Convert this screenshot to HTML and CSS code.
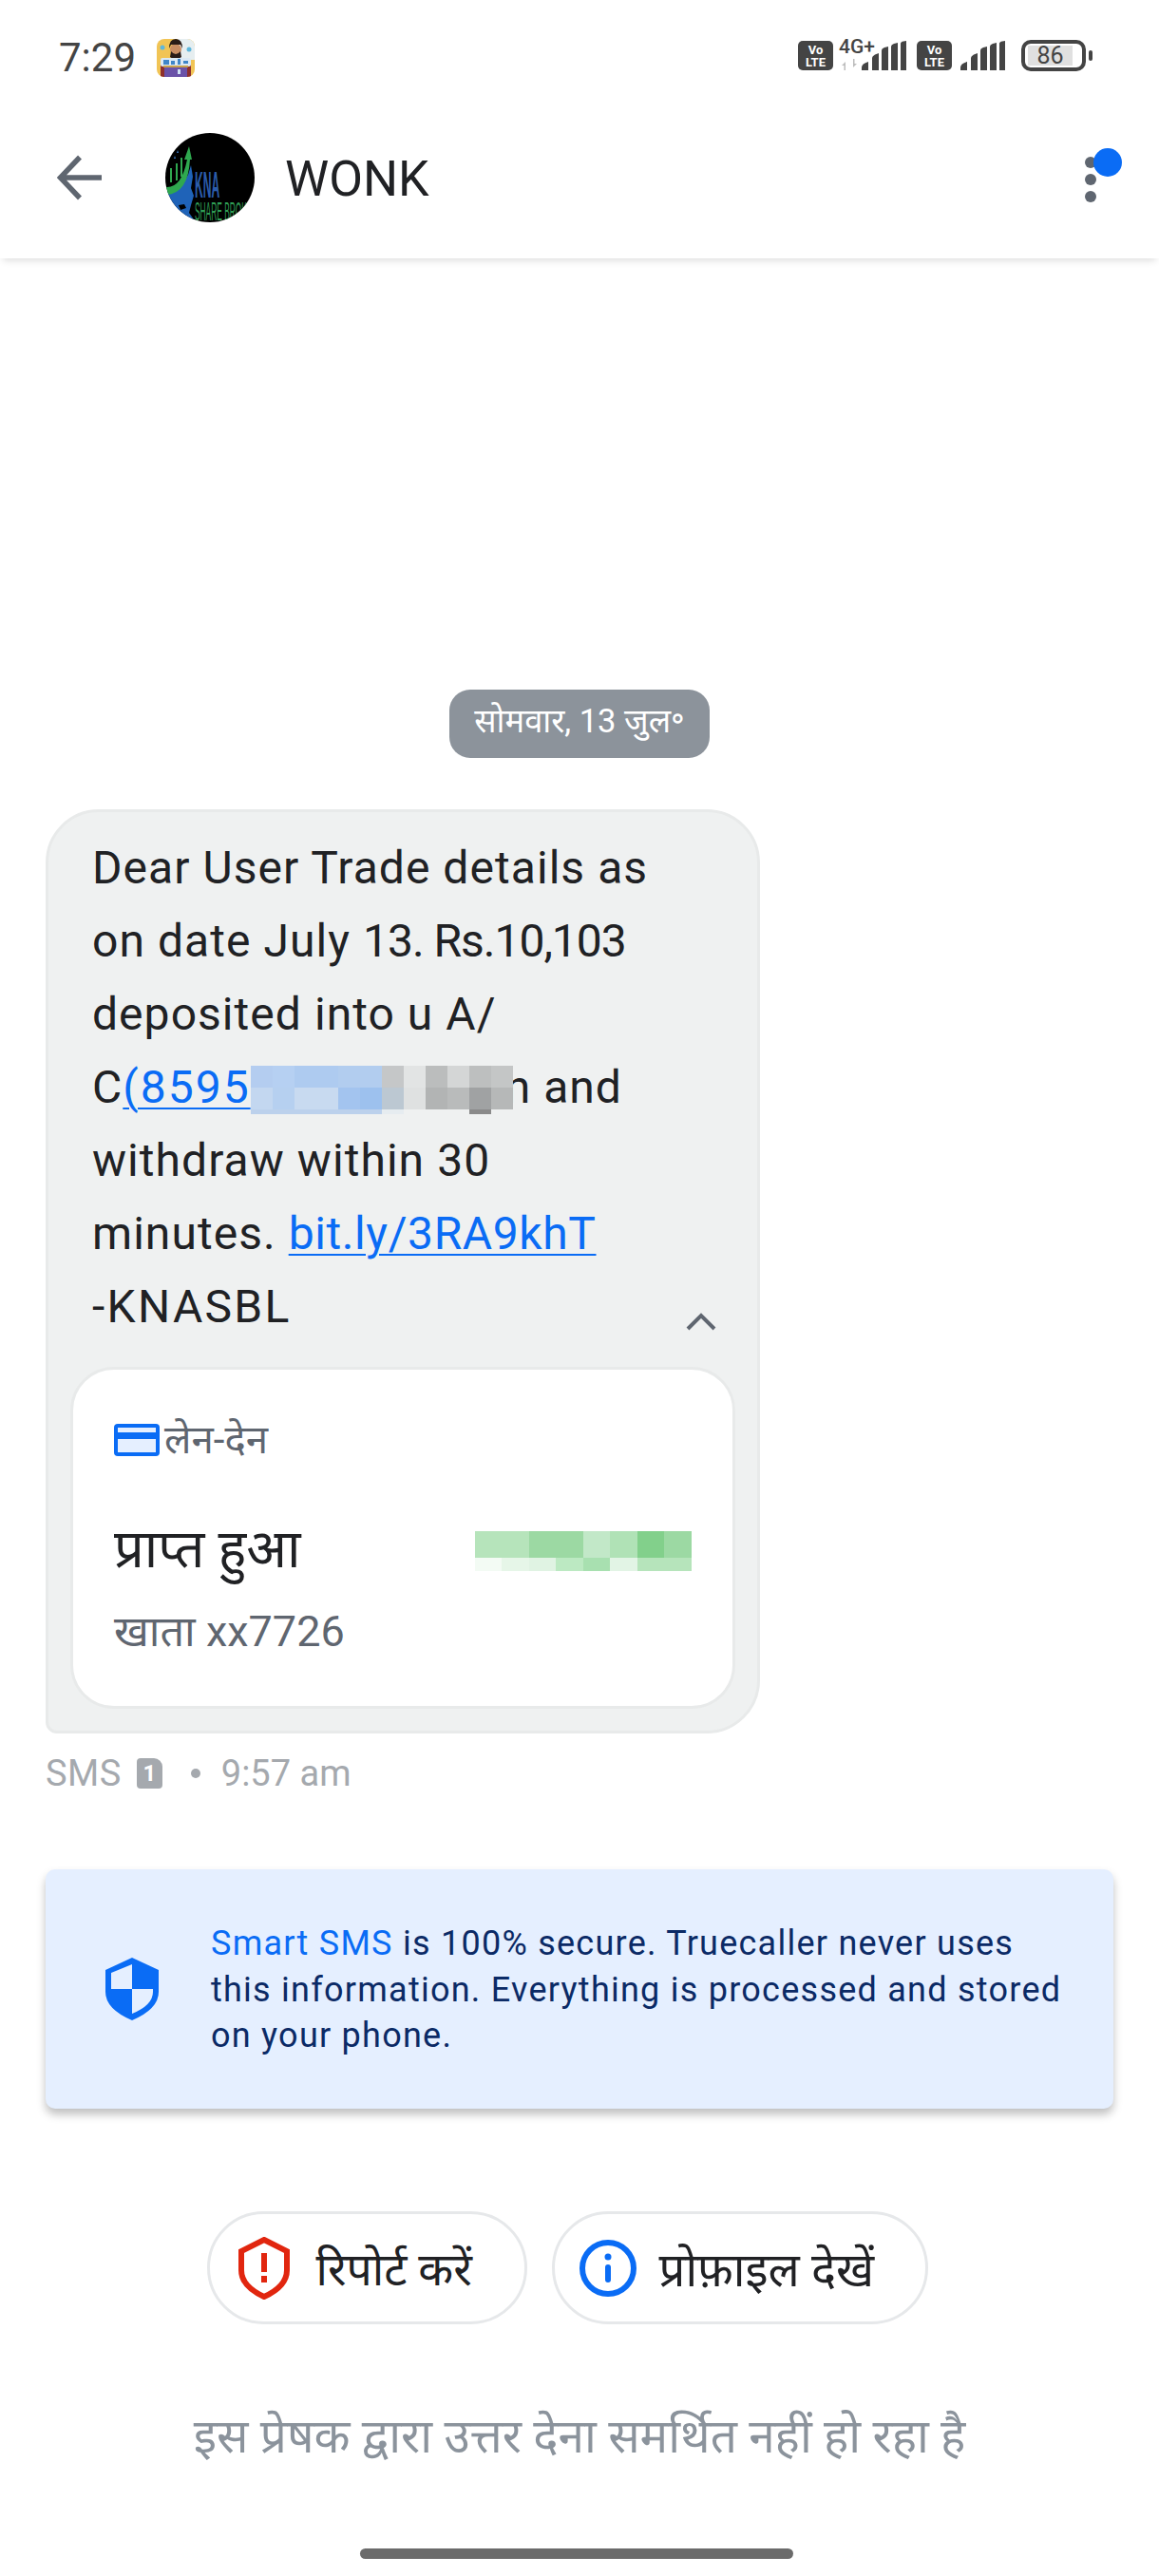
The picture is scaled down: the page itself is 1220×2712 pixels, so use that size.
FILE: index.html
```html
<!DOCTYPE html>
<html lang="hi">
<head>
    <meta charset="UTF-8">
    <meta name="viewport" content="width=device-width, initial-scale=1.0">
    <title>WONK</title>
    <link rel="stylesheet" href="styles.css">
</head>
<body>

<div class="phone">
    <div class="status-bar">
        <span class="clock">7:29</span>
        <svg class="app-icon" viewBox="0 0 40 40" width="40" height="40">
            <defs><clipPath id="iconClip"><rect width="40" height="40" rx="8"/></clipPath></defs>
            <g clip-path="url(#iconClip)">
                <rect width="40" height="40" fill="#f1c455"/>
                <rect x="22" width="18" height="22" fill="#e6eef0"/>
                <path d="M4 40V27q1-6 10-7h12q9 1 10 7v13z" fill="#8e2f2c"/>
                <circle cx="20" cy="11" r="6" fill="#c98d63"/>
                <path d="M13 10q0-10 7-10t7 10l-2-4H15zM15 13q5 6 10 0l1 6q-6 5-12 0z" fill="#2a1c18"/>
                <rect x="4" y="20" width="32" height="9" rx="2" fill="#dbe9f5"/>
                <path d="M7 22h6v5H7zM15 23h4v4h-4zM22 21h3v6h-3zM28 23h5v3h-5z" fill="#3f86c9"/>
                <rect x="8" y="29" width="24" height="11" fill="#6a52a8"/>
                <rect x="7" y="28" width="26" height="2" fill="#c9a24d"/>
                <path d="M22 32h3v5h-3z" fill="#cfe2f5"/>
                <circle cx="6" cy="9" r="2.500" fill="#5fb7dc"/>
                <circle cx="34" cy="11" r="2.500" fill="#5fb7dc"/>
            </g>
        </svg>
        <div class="status-icons">
            <span class="volte">Vo<br>LTE</span>
            <div class="net">
                <span class="net-label">4G+</span>
                <svg class="arrows" viewBox="0 0 16 12" width="16" height="12">
                    <path d="M0 7l4-4v9H2.500V7zM16 5l-4 4V0h1.500v5z" fill="#bdbdbd"/>
                </svg>
            </div>
            <svg class="signal" viewBox="0 0 48 31" width="48" height="31">
                <path d="M0 31v-3q0-4 7-6v9zM11 31V18q0-2 3-3.500l4-1.500V31zM21 31V10q0-2 3-3l4-1v25zM31 31V6q0-2 3-3l4-1v29zM41 31V3q0-2 3-2.500l3-.5v31z" fill="#444"/>
            </svg>
            <span class="volte volte-two">Vo<br>LTE</span>
            <svg class="signal signal-two" viewBox="0 0 48 31" width="48" height="31">
                <path d="M0 31v-3q0-4 7-6v9zM11 31V18q0-2 3-3.500l4-1.500V31zM21 31V10q0-2 3-3l4-1v25zM31 31V6q0-2 3-3l4-1v29zM41 31V3q0-2 3-2.500l3-.5v31z" fill="#444"/>
            </svg>
            <div class="battery"><span class="battery-level">86</span></div>
            <span class="battery-nub"></span>
        </div>
    </div>

    <header class="top-bar">
        <svg class="back" viewBox="0 0 48 48" width="48" height="48">
            <path d="M47 24H4M24 2.500L3.500 24 24 45.500" fill="none" stroke="#5f6670" stroke-width="5.500"/>
        </svg>
        <svg class="avatar" viewBox="0 0 94 94" width="94" height="94">
            <defs><clipPath id="avatarClip"><circle cx="47" cy="47" r="47"/></clipPath></defs>
            <g clip-path="url(#avatarClip)">
                <rect width="94" height="94" fill="#000"/>
                <path d="M0 62Q14 62 24 44L27 34 29 46 27 58 30 66 27 76 25 84 32 94H0z" fill="#1f63b8"/>
                <path d="M14 76l6-1 2 4-6 2z" fill="#000"/>
                <path d="M1 57Q17 58 23 28l-3 0 5-14 3 14-2 0Q24 64 1 65z" fill="#2fa84f"/>
                <path d="M5 52V37h2v15zM11 50V32h2v18zM16 46V26h2v20z" fill="#2fa84f"/>
                <path d="M10 24l1 3-2 0zM13 18l1 3-2 0z" fill="#3b7cc9"/>
                <text class="avatar-kna" transform="translate(31 68) scale(.32 1)">KNA</text>
                <text class="avatar-share" transform="translate(31 92) scale(.31 1)">SHARE BROKER</text>
            </g>
        </svg>
        <h1 class="sender">WONK</h1>
        <div class="menu">
            <span class="menu-dot"></span>
            <span class="menu-dot"></span>
            <span class="menu-dot"></span>
            <span class="unread-dot"></span>
        </div>
    </header>

    <main class="thread">
        <div class="date-chip">सोमवार, 13 जुल॰</div>

        <div class="bubble">
            <p class="message">
                Dear User Trade details as<br>
                on date July <span class="tight">13. Rs.10,103</span><br>
                deposited into u A/<br>
                C<a class="link link-num">(8595</a><span class="blur-number"></span>n and<br>
                withdraw within 30<br>
                minutes. <a class="link link-short">bit.ly/3RA9khT</a><br>
                <span class="signature">-KNASBL</span>
            </p>
            <svg class="chevron" viewBox="0 0 32 20" width="32" height="20">
                <path d="M2 18L16 4l14 14" fill="none" stroke="#5f6670" stroke-width="4"/>
            </svg>

            <div class="txn-card">
                <div class="txn-type">
                    <svg viewBox="0 0 48 34" width="48" height="34">
                        <rect width="48" height="34" rx="4" fill="#0a6cf5"/>
                        <rect x="4" y="4" width="40" height="5" fill="#e5efff"/>
                        <rect x="4" y="16" width="40" height="14" fill="#e5efff"/>
                    </svg>
                    <span>लेन-देन</span>
                </div>
                <div class="txn-row">
                    <span class="txn-status">प्राप्त हुआ</span>
                    <span class="blur-amount"></span>
                </div>
                <div class="txn-account">खाता xx7726</div>
            </div>
        </div>

        <div class="msg-meta">
            <span class="meta-sms">SMS</span>
            <span class="sim">1</span>
            <span class="meta-dot"></span>
            <span>9:57 am</span>
        </div>

        <div class="notice">
            <svg class="notice-shield" viewBox="0 0 56 66" width="56" height="66">
                <path d="M28 0L56 13V36Q56 54 28 66 0 54 0 36V13z" fill="#0a6cf5"/>
                <path d="M28 7V33H6V16zM28 33H50V36Q50 50 28 59z" fill="#e5efff"/>
            </svg>
            <p class="notice-text"><span class="accent">Smart SMS</span> is 100% secure. Truecaller never uses this information. Everything is processed and stored on your phone.</p>
        </div>

        <div class="actions">
            <button class="pill pill-report">
                <svg viewBox="0 0 54 66" width="54" height="66">
                    <path d="M27 3L51 15V35Q51 52 27 63 3 52 3 35V15z" fill="none" stroke="#e1260f" stroke-width="6"/>
                    <rect x="24" y="17" width="6" height="20" fill="#e1260f"/>
                    <rect x="24" y="41" width="6" height="7" fill="#e1260f"/>
                </svg>
                <span>रिपोर्ट करें</span>
            </button>
            <button class="pill pill-profile">
                <svg viewBox="0 0 60 60" width="60" height="60">
                    <circle cx="30" cy="30" r="27" fill="none" stroke="#0a6cf5" stroke-width="6"/>
                    <circle cx="30" cy="18" r="3.500" fill="#0a6cf5"/>
                    <rect x="27" y="26" width="6" height="19" rx="3" fill="#0a6cf5"/>
                </svg>
                <span>प्रोफ़ाइल देखें</span>
            </button>
        </div>

        <p class="no-reply">इस प्रेषक द्वारा उत्तर देना समर्थित नहीं हो रहा है</p>
    </main>

    <div class="home-bar"></div>
</div>

</body>
</html>
```

FILE: styles.css
```css
* {
    box-sizing: border-box;
}
body {
    margin: 0;
    background-color: #fff;
    font-family: 'Roboto', 'Noto Sans', 'Noto Sans Devanagari', sans-serif;
    color: #202124;
}
.phone {
    width: 1220px;
    height: 2712px;
    overflow: hidden;
    display: flex;
    flex-direction: column;
}

/* status bar */
.status-bar {
    height: 102px;
    padding: 41px 70px 0 62px;
    display: flex;
    align-items: flex-start;
}
.clock {
    font-size: 42px;
    line-height: 36px;
    color: #444;
    margin-top: 2px;
}
.app-icon {
    margin-left: 22px;
}
.status-icons {
    margin-left: auto;
    margin-top: 2px;
    display: flex;
    align-items: flex-start;
}
.volte {
    width: 37px;
    height: 31px;
    border-radius: 5px;
    background-color: #444;
    color: #fff;
    font-size: 13px;
    font-weight: 700;
    line-height: 13px;
    padding-top: 3px;
    text-align: center;
}
.volte-two {
    margin-left: 10px;
}
.net {
    width: 24px;
    margin-left: 6px;
    height: 31px;
    position: relative;
}
.net-label {
    position: absolute;
    left: 0;
    top: -6px;
    font-size: 21px;
    font-weight: 500;
    color: #444;
}
.arrows {
    position: absolute;
    left: 3px;
    top: 19px;
}
.signal-two {
    margin-left: 9px;
}
.battery {
    margin-left: 16px;
    margin-top: -1px;
    width: 68px;
    height: 33px;
    border: 4px solid #444;
    border-radius: 10px;
    padding: 2px 3px;
}
.battery-level {
    display: block;
    width: 47px;
    height: 21px;
    background-color: #e0e0e0;
    color: #444;
    font-size: 25px;
    line-height: 21px;
    text-align: center;
}
.battery-nub {
    width: 4px;
    height: 11px;
    margin: 10px 0 0 3px;
    background-color: #444;
    border-radius: 2px;
}

/* top bar */
.top-bar {
    height: 170px;
    padding: 0 66px 0 60px;
    display: flex;
    align-items: center;
    background-color: #fff;
    box-shadow: 0 5px 8px -3px rgba(0, 0, 0, 0.14);
    position: relative;
}
.avatar {
    margin-left: 66px;
}
.avatar-kna {
    font-size: 38px;
    font-weight: 700;
    fill: #2b5cab;
    font-family: 'Liberation Sans', sans-serif;
}
.avatar-share {
    font-size: 27px;
    fill: #2f9e55;
    font-family: 'Liberation Sans', sans-serif;
}
.sender {
    margin: 3px 0 0 32px;
    font-size: 52px;
    font-weight: 400;
    color: #202124;
}
.menu {
    margin-left: auto;
    display: flex;
    flex-direction: column;
    gap: 6px;
    position: relative;
    margin-top: 4px;
}
.menu-dot {
    width: 12px;
    height: 12px;
    border-radius: 50%;
    background-color: #5f6670;
}
.unread-dot {
    position: absolute;
    left: 9px;
    top: -9px;
    width: 30px;
    height: 30px;
    border-radius: 50%;
    background-color: #0a6cf5;
}

/* thread */
.thread {
    padding: 454px 48px 0;
    display: flex;
    flex-direction: column;
}
.date-chip {
    align-self: center;
    height: 72px;
    width: 274px;
    border-radius: 22px;
    background-color: #8c939b;
    color: #fff;
    font-size: 34.500px;
    line-height: 66px;
    text-align: center;
}
.bubble {
    width: 752px;
    height: 973px;
    margin-top: 54px;
    padding: 0 23px 23px;
    border: 3px solid #e8eaea;
    border-radius: 56px 56px 56px 12px;
    background-color: #eff1f1;
    position: relative;
    display: flex;
    flex-direction: column;
}
.message {
    margin: 20px 0 0 23px;
    font-size: 48px;
    line-height: 77px;
    letter-spacing: 1.05px;
    color: #202124;
    white-space: nowrap;
}
.tight {
    letter-spacing: -1px;
}
.signature {
    letter-spacing: 2.300px;
}
.link {
    color: #0a6cf5;
    text-decoration: underline;
    text-decoration-thickness: 2px;
    text-underline-offset: 5px;
}
.link-num {
    letter-spacing: 2px;
}
.link-short {
    letter-spacing: 0.6px;
}
.blur-number {
    display: inline-block;
    width: 276px;
    height: 51px;
    margin-right: -8px;
    vertical-align: -12px;
    position: relative;
    z-index: 1;
    background:
        linear-gradient(90deg, #b4cdf0 0 8.33%, #b6d0f2 8.33% 16.66%, #aecbf0 16.66% 33.33%, #b2cdef 33.33% 50%, #c5c7c8 50% 58.33%, #e2e4e4 58.33% 66.66%, #bbbdbd 66.66% 75%, #d4d6d6 75% 83.33%, #bdbfbf 83.33% 91.66%, #c4c6c6 91.66%) top / 100% 23px no-repeat,
        linear-gradient(90deg, #c3d7f0 0 8.33%, #b6d0f0 8.33% 16.66%, #c8daf0 16.66% 33.33%, #a3c4ef 33.33% 41.66%, #9dc1ee 41.66% 50%, #bcc8d2 50% 58.33%, #dfe1e1 58.33% 66.66%, #b2b4b4 66.66% 75%, #b9bbbb 75% 83.33%, #a0a2a3 83.33% 91.66%, #b6b8b8 91.66%) 0 23px / 100% 23px no-repeat,
        linear-gradient(90deg, #bcd1ec 0 50%, #e6ecf0 50% 58.33%, transparent 58.33% 83.33%, #8a8a8a 83.33% 91.66%, transparent 91.66%) bottom / 100% 5px no-repeat;
}
.chevron {
    position: absolute;
    right: 43px;
    top: 526px;
}
.txn-card {
    margin-top: auto;
    height: 360px;
    padding: 51px 43px 0;
    border: 3px solid #e8eaea;
    border-radius: 46px;
    background-color: #fff;
}
.txn-type {
    display: flex;
    align-items: center;
    gap: 5px;
    height: 46px;
    font-size: 42px;
    line-height: 46px;
    color: #5f6670;
}
.txn-row {
    display: flex;
    align-items: center;
    justify-content: space-between;
    margin-top: 60px;
    height: 64px;
}
.txn-status {
    font-size: 56px;
    line-height: 64px;
    color: #202124;
}
.blur-amount {
    width: 228px;
    height: 42px;
    margin-top: 3px;
    background:
        linear-gradient(90deg, #b6e4bb 0 25%, #9cd9a3 25% 50%, #c2e8c8 50% 62.500%, #b0e2b6 62.500% 75%, #82d08b 75% 87.500%, #9cd9a3 87.500%) top / 100% 28px no-repeat,
        linear-gradient(90deg, #f3fbf4 0 12.500%, #e6f6e8 12.500% 25%, #e0f3e3 25% 37.500%, #bce9c2 37.500% 50%, #a8e0b0 50% 62.500%, #e2f4e5 62.500% 75%, #b6e4bb 75%) bottom / 100% 14px no-repeat;
}
.txn-account {
    margin-top: 30px;
    font-size: 45px;
    line-height: 50px;
    color: #5f6670;
}

/* meta under bubble */
.msg-meta {
    display: flex;
    align-items: center;
    margin-top: 17px;
    height: 50px;
    font-size: 38px;
    color: #a5a9ae;
}
.meta-sms {
    letter-spacing: 0.5px;
}
.sim {
    width: 27px;
    height: 32px;
    margin-left: 16px;
    border-radius: 4px 9px 4px 4px;
    background-color: #a5a9ae;
    color: #fff;
    font-size: 24px;
    font-weight: 700;
    line-height: 32px;
    text-align: center;
}
.meta-dot {
    width: 10px;
    height: 10px;
    margin: 0 22px 0 30px;
    border-radius: 50%;
    background-color: #a5a9ae;
}

/* info card */
.notice {
    height: 252px;
    margin-top: 76px;
    padding: 0 44px 0 63px;
    display: flex;
    align-items: center;
    gap: 55px;
    border-radius: 10px;
    background-color: #e5efff;
    box-shadow: 0 6px 10px rgba(0, 0, 0, 0.25);
}
.notice-shield {
    flex-shrink: 0;
}
.notice-text {
    margin: 2px 0 0;
    font-size: 36px;
    line-height: 48.500px;
    letter-spacing: 1.25px;
    color: #0b2a66;
}
.accent {
    color: #0a6cf5;
}

/* actions */
.actions {
    display: flex;
    justify-content: center;
    gap: 26px;
    margin-top: 108px;
    padding-right: 26px;
}
.pill {
    height: 119px;
    display: flex;
    align-items: center;
    border: 3px solid #e6e8ea;
    border-radius: 60px;
    background-color: #fff;
    font-family: inherit;
    font-size: 48px;
    color: #202124;
}
.pill-report {
    width: 337px;
    padding: 0 0 0 30px;
    gap: 28px;
}
.pill-profile {
    width: 396px;
    padding: 0 0 0 26px;
    gap: 24px;
    font-size: 49px;
}
.no-reply {
    margin: 86px 0 0;
    font-size: 49.500px;
    line-height: 64px;
    text-align: center;
    color: #8b939c;
}
.home-bar {
    align-self: center;
    margin-top: auto;
    margin-bottom: 18px;
    margin-left: -6px;
    width: 456px;
    height: 11px;
    flex-shrink: 0;
    border-radius: 6px;
    background-color: #6b6b6b;
}
```
